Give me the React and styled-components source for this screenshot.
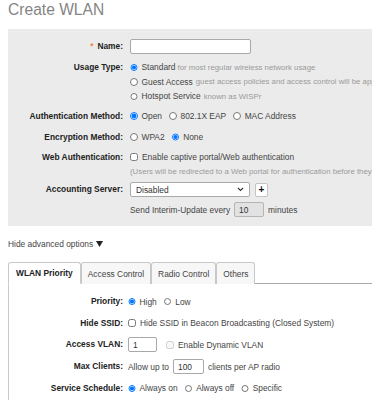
import React from "react";
import styled, { createGlobalStyle } from "styled-components";

const GlobalStyle = createGlobalStyle`
  html, body { margin: 0; padding: 0; overflow: hidden; background: #fff; }
  body { font-family: "Liberation Sans", Arial, sans-serif; font-size: 8.4px; color: #444; }
  * { box-sizing: border-box; }
`;

const Page = styled.div`
  width: 720px;
  padding: 1px 0 0 8px;
`;

const Title = styled.h1`
  margin: 0;
  font-size: 15.6px;
  line-height: 18px;
  font-weight: normal;
  color: #858585;
`;

const FormPanel = styled.div`
  margin-top: 10px;
  background: #ebebeb;
  padding: 10px 0 9px;
  display: flex;
  flex-direction: column;
`;

const FieldRow = styled.div`
  display: grid;
  grid-template-columns: ${(p) => p.$labelW}px 1fr;
  column-gap: ${(p) => p.$colGap}px;
  align-items: start;
  margin-top: ${(p) => p.$mt || 0}px;
`;

const FieldLabel = styled.div`
  text-align: right;
  font-weight: bold;
  color: #222;
  line-height: ${(p) => p.$lh}px;
  white-space: nowrap;
`;

const Req = styled.span`
  color: #f0883e;
  margin-right: 4px;
`;

const Controls = styled.div`
  display: flex;
  flex-direction: column;
  white-space: nowrap;
`;

const Line = styled.div`
  display: flex;
  align-items: center;
  height: ${(p) => p.$h}px;
  white-space: nowrap;
`;

const Option = styled.label`
  display: inline-flex;
  align-items: center;
  gap: 4px;
  margin-right: 7px;
  color: #444;
`;

const Radio = styled.input.attrs({ type: "radio" })`
  width: 7.5px;
  height: 7.5px;
  margin: 0;
  flex: none;
`;

const Check = styled.input.attrs({ type: "checkbox" })`
  width: 8px;
  height: 8px;
  margin: 0;
  flex: none;
`;

const Hint = styled.span`
  color: #9a9a9a;
  font-size: 7.8px;
  margin-left: ${(p) => p.$ml || 0}px;
`;

const TextBox = styled.div`
  width: ${(p) => p.$w}px;
  height: 15px;
  border: 1px solid ${(p) => (p.$disabled ? "#b5b5b5" : "#a9a9a9")};
  border-radius: 2px;
  background: ${(p) => (p.$disabled ? "#e2e2e2" : "#fff")};
  color: #333;
  padding: 0 4px;
  display: flex;
  align-items: center;
  margin: 0 ${(p) => p.$mr || 0}px 0 ${(p) => p.$ml || 0}px;
  flex: none;
`;

const SelectBox = styled.div`
  width: 120px;
  height: 15px;
  border: 1px solid #a9a9a9;
  border-radius: 2px;
  background: #fff;
  color: #333;
  padding: 0 5px;
  display: flex;
  align-items: center;
  justify-content: space-between;
`;

const PlusButton = styled.div`
  width: 13px;
  height: 14px;
  margin-left: 5px;
  border: 1px solid #c4c4c4;
  border-radius: 2px;
  background: #fff;
  display: flex;
  align-items: center;
  justify-content: center;
  color: #111;
  font-weight: bold;
  font-size: 10px;
  line-height: 1;
`;

const Advanced = styled.div`
  margin-top: 11px;
  line-height: 14px;
  color: #444;
  display: flex;
  align-items: center;
  gap: 3px;
`;

const TabBar = styled.div`
  margin-top: 11px;
  display: flex;
  border-bottom: 1px solid #a8a8a8;
  height: 22px;
`;

const Tab = styled.div`
  height: 22px;
  padding: 0 ${(p) => (p.$active ? 7 : 6)}px;
  display: flex;
  align-items: center;
  border: 1px solid #c8c8c8;
  border-bottom: ${(p) => (p.$active ? "1px solid #fff" : "none")};
  border-radius: 3px 3px 0 0;
  background: ${(p) => (p.$active ? "#fff" : "#f7f7f7")};
  font-weight: ${(p) => (p.$active ? "bold" : "normal")};
  color: ${(p) => (p.$active ? "#222" : "#444")};
  margin-bottom: -1px;
`;

const TabPanel = styled.div`
  border-left: 1px solid #c8c8c8;
  border-right: 1px solid #c8c8c8;
  padding: 10px 0 20px;
  display: flex;
  flex-direction: column;
  gap: 6.7px;
`;

const Chevron = () => (
  <svg width="7" height="5" viewBox="0 0 7 5">
    <path d="M1 1 L3.5 3.5 L6 1" fill="none" stroke="#333" strokeWidth="1.1" />
  </svg>
);

const TopRow = ({ label, lh = 14, mt, children, req }) => (
  <FieldRow $labelW={115} $colGap={7} $mt={mt}>
    <FieldLabel $lh={lh}>
      {req && <Req>*</Req>}
      {label}
    </FieldLabel>
    <Controls>{children}</Controls>
  </FieldRow>
);

const TabRow = ({ label, children }) => (
  <FieldRow $labelW={114} $colGap={5}>
    <FieldLabel $lh={15}>{label}</FieldLabel>
    <Controls>{children}</Controls>
  </FieldRow>
);

export default function App() {
  return (
    <>
      <GlobalStyle />
      <Page>
        <Title>Create WLAN</Title>
        <FormPanel>
          <TopRow label="Name:" req lh={15}>
            <Line $h={15}>
              <TextBox $w={121} />
            </Line>
          </TopRow>
          <TopRow label="Usage Type:" lh={14.5} mt={6}>
            <Line $h={14.5}>
              <Option>
                <Radio defaultChecked name="usage" />
                Standard
              </Option>
              <Hint $ml={-5}>for most regular wireless network usage</Hint>
            </Line>
            <Line $h={14.5}>
              <Option>
                <Radio name="usage" />
                Guest Access
              </Option>
              <Hint $ml={-4}>guest access policies and access control will be applied</Hint>
            </Line>
            <Line $h={14.5}>
              <Option>
                <Radio name="usage" />
                Hotspot Service
              </Option>
              <Hint $ml={-4}>known as WISPr</Hint>
            </Line>
          </TopRow>
          <TopRow label="Authentication Method:" mt={5.5}>
            <Line $h={14}>
              <Option>
                <Radio defaultChecked name="auth" />
                Open
              </Option>
              <Option>
                <Radio name="auth" />
                802.1X EAP
              </Option>
              <Option>
                <Radio name="auth" />
                MAC Address
              </Option>
            </Line>
          </TopRow>
          <TopRow label="Encryption Method:" mt={7}>
            <Line $h={14}>
              <Option>
                <Radio name="enc" />
                WPA2
              </Option>
              <Option>
                <Radio defaultChecked name="enc" />
                None
              </Option>
            </Line>
          </TopRow>
          <TopRow label="Web Authentication:" mt={6}>
            <Line $h={14}>
              <Option>
                <Check />
                Enable captive portal/Web authentication
              </Option>
            </Line>
            <Line $h={14}>
              <Hint>
                (Users will be redirected to a Web portal for authentication before they can access the network)
              </Hint>
            </Line>
          </TopRow>
          <TopRow label="Accounting Server:" lh={15} mt={4}>
            <Line $h={15}>
              <SelectBox>
                <span>Disabled</span>
                <Chevron />
              </SelectBox>
              <PlusButton>+</PlusButton>
            </Line>
          </TopRow>
          <TopRow label="" lh={15} mt={5}>
            <Line $h={15}>
              Send Interim-Update every
              <TextBox $w={30} $disabled $ml={4} $mr={4}>
                10
              </TextBox>
              minutes
            </Line>
          </TopRow>
        </FormPanel>

        <Advanced>
          Hide advanced options
          <svg width="7" height="6" viewBox="0 0 7 6">
            <path d="M0 0 H7 L3.5 6 Z" fill="#222" />
          </svg>
        </Advanced>

        <TabBar>
          <Tab $active>WLAN Priority</Tab>
          <Tab>Access Control</Tab>
          <Tab>Radio Control</Tab>
          <Tab>Others</Tab>
        </TabBar>
        <TabPanel>
          <TabRow label="Priority:">
            <Line $h={15}>
              <Option>
                <Radio defaultChecked name="prio" />
                High
              </Option>
              <Option>
                <Radio name="prio" />
                Low
              </Option>
            </Line>
          </TabRow>
          <TabRow label="Hide SSID:">
            <Line $h={15}>
              <Option>
                <Check />
                Hide SSID in Beacon Broadcasting (Closed System)
              </Option>
            </Line>
          </TabRow>
          <TabRow label="Access VLAN:">
            <Line $h={15}>
              <TextBox $w={29} $mr={9}>
                1
              </TextBox>
              <Option>
                <Check disabled />
                Enable Dynamic VLAN
              </Option>
            </Line>
          </TabRow>
          <TabRow label="Max Clients:">
            <Line $h={15}>
              Allow up to
              <TextBox $w={31} $ml={4} $mr={4}>
                100
              </TextBox>
              clients per AP radio
            </Line>
          </TabRow>
          <TabRow label="Service Schedule:">
            <Line $h={15}>
              <Option>
                <Radio defaultChecked name="sched" />
                Always on
              </Option>
              <Option>
                <Radio name="sched" />
                Always off
              </Option>
              <Option>
                <Radio name="sched" />
                Specific
              </Option>
            </Line>
          </TabRow>
        </TabPanel>
      </Page>
    </>
  );
}
